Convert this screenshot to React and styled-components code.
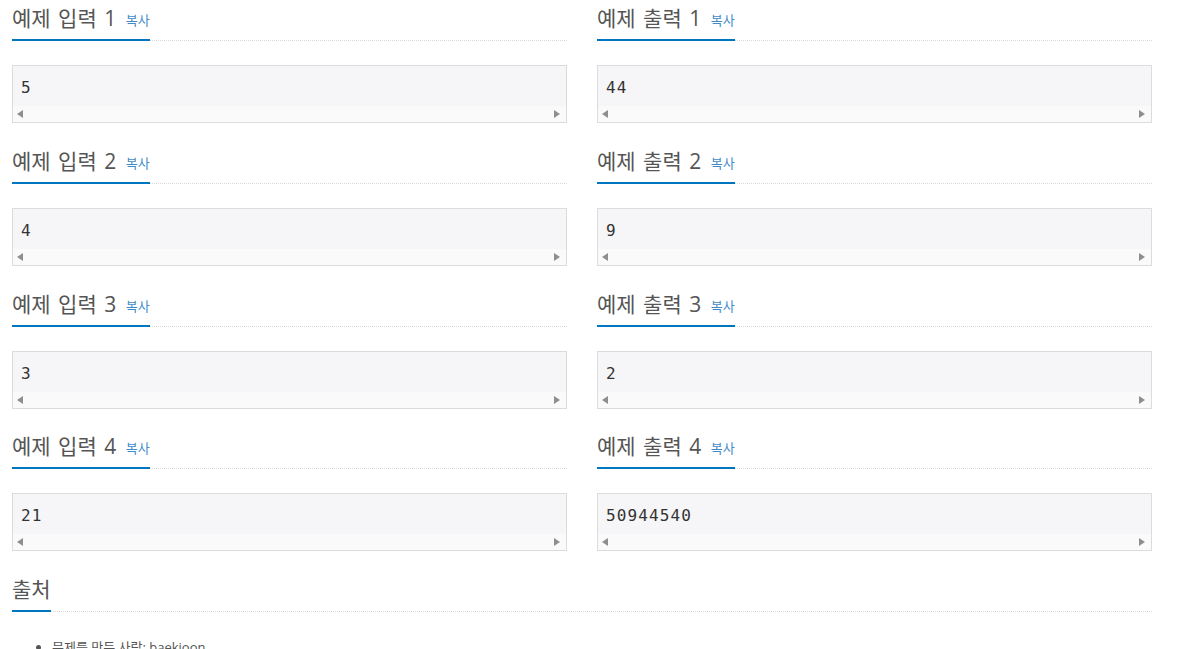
import React from "react";
import styled, { createGlobalStyle } from "styled-components";

const Global = createGlobalStyle`
  html, body { margin: 0; padding: 0; background: #fff; }
  body { font-family: "Open Sans", "Noto Sans CJK KR", sans-serif; color: #333; overflow: hidden; }
`;

const Page = styled.div`
  width: 1140px;
  padding-left: 12px;
`;

const Grid = styled.div`
  display: grid;
  grid-template-columns: 555px 555px;
  column-gap: 30px;
`;

const Section = styled.section`
  margin-bottom: 19.75px;
`;

const Headline = styled.div`
  border-bottom: 1px dotted #d9d9d9;
  height: 40px;
`;

const Title = styled.h2`
  display: inline-block;
  margin: 0;
  padding: 0 0 3px;
  height: 36px;
  line-height: 36px;
  font-size: 21px;
  font-weight: 400;
  word-spacing: 2px;
  color: #555;
  font-family: "Open Sans", "Noto Sans CJK KR", sans-serif;
  border-bottom: 2px solid #0076c0;
  white-space: nowrap;
`;

const Copy = styled.span`
  font-size: 13px;
  color: #428bca;
  margin-left: 2px;
  word-spacing: 0;
  vertical-align: 1px;
`;

const Pre = styled.div`
  margin-top: 24px;
  border: 1px solid #dcdcdc;
  background: #f6f6f8;
  display: flex;
  flex-direction: column;
  height: 56px;
`;

const Code = styled.div`
  height: 40px;
  line-height: 44px;
  padding: 0 8px;
  font-family: "DejaVu Sans Mono", monospace;
  font-size: 16px;
  letter-spacing: 1.1px;
  color: #333;
`;

const Scrollbar = styled.div`
  height: 16px;
  background: #fafafa;
  display: flex;
  align-items: center;
  justify-content: space-between;
  padding: 0 6px 0 4px;
`;

const Arrow = styled.span`
  display: block;
  width: 0;
  height: 0;
  border-top: 4px solid transparent;
  border-bottom: 4px solid transparent;
  ${(p) =>
    p.$dir === "left"
      ? "border-right: 6px solid #8e8e8e;"
      : "border-left: 6px solid #8e8e8e;"}
`;

const List = styled.ul`
  margin: 24px 0 0;
  padding-left: 40px;
  font-size: 13px;
  line-height: 22px;
  color: #555;
`;

const samples = [
  ["5", "44"],
  ["4", "9"],
  ["3", "2"],
  ["21", "50944540"],
];

function Sample({ title, value }) {
  return (
    <Section>
      <Headline>
        <Title>
          {title} <Copy>복사</Copy>
        </Title>
      </Headline>
      <Pre>
        <Code>{value}</Code>
        <Scrollbar>
          <Arrow $dir="left" />
          <Arrow $dir="right" />
        </Scrollbar>
      </Pre>
    </Section>
  );
}

export default function App() {
  return (
    <Page>
      <Global />
      <Grid>
        {samples.map(([inp, out], i) => (
          <React.Fragment key={i}>
            <Sample title={`예제 입력 ${i + 1}`} value={inp} />
            <Sample title={`예제 출력 ${i + 1}`} value={out} />
          </React.Fragment>
        ))}
      </Grid>
      <Section>
        <Headline>
          <Title>출처</Title>
        </Headline>
        <List>
          <li>문제를 만든 사람: baekjoon</li>
        </List>
      </Section>
    </Page>
  );
}
